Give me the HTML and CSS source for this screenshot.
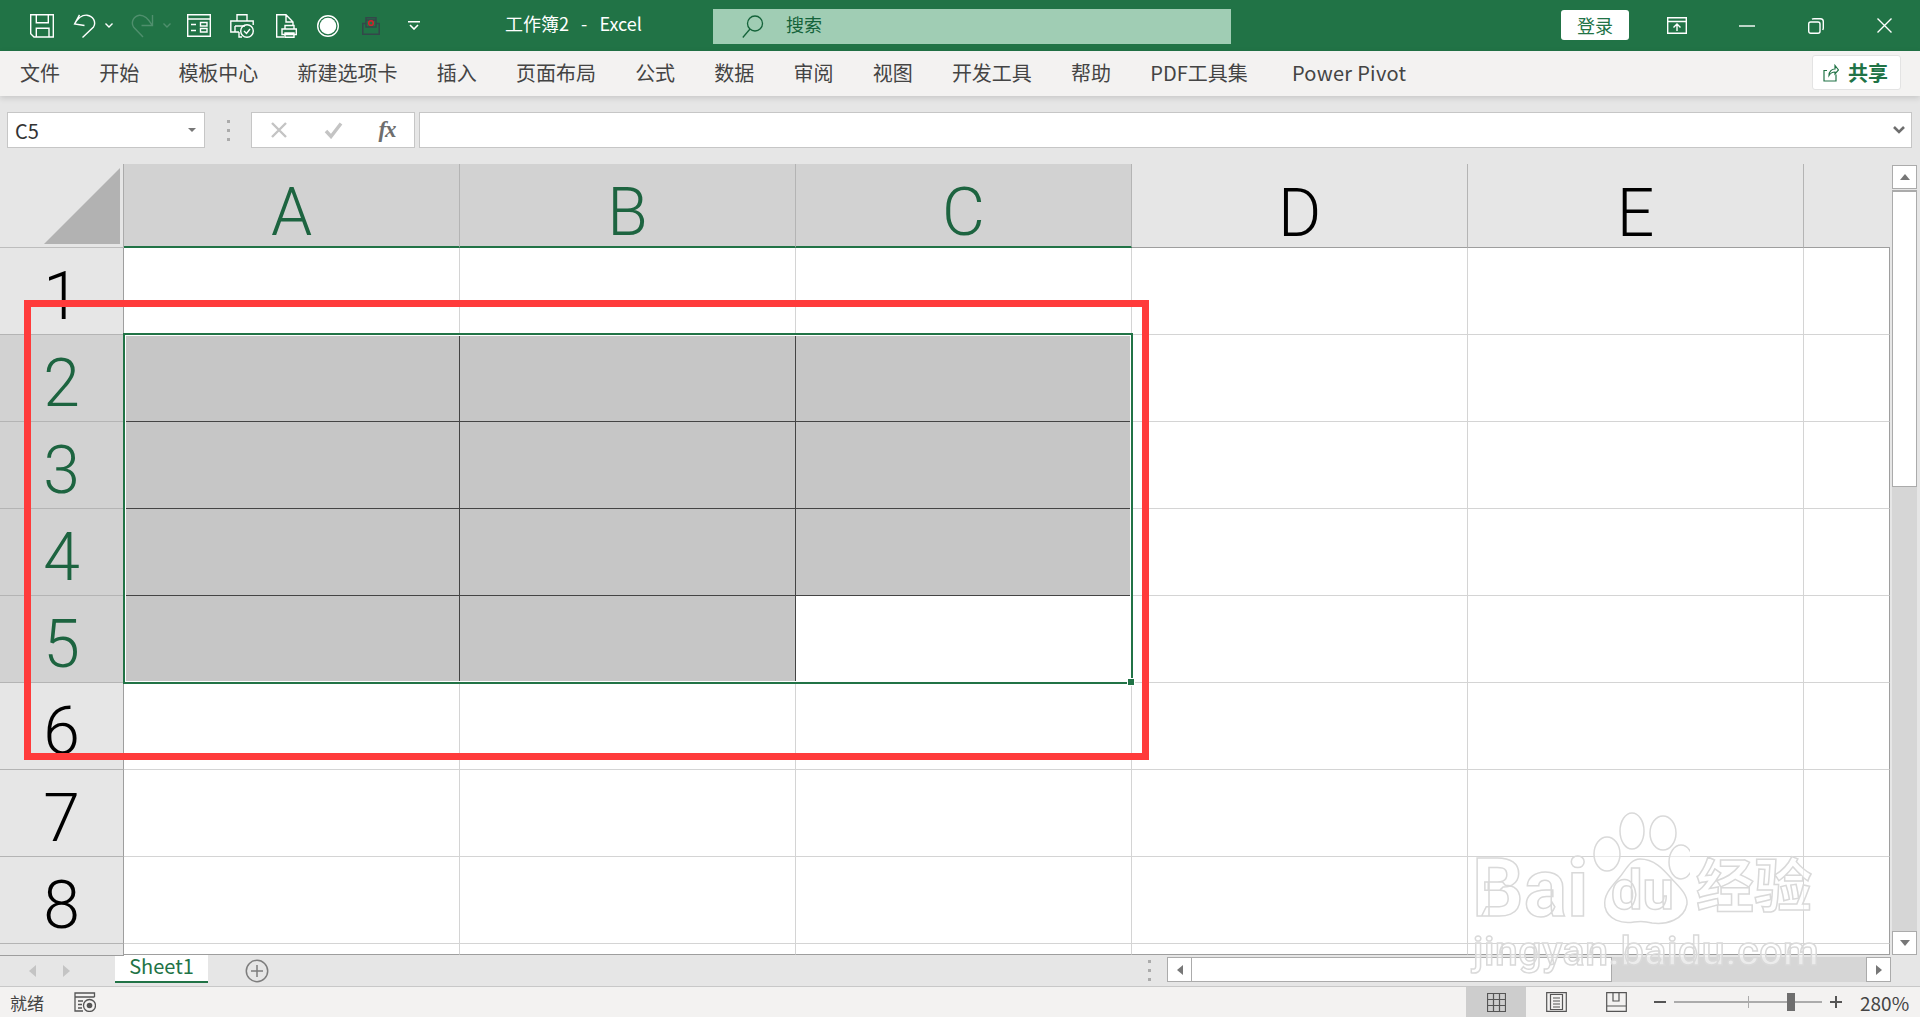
FILE: index.html
```html
<!DOCTYPE html>
<html lang="zh-CN">
<head>
<meta charset="utf-8">
<title>工作簿2 - Excel</title>
<link rel="stylesheet" href="styles.css">
</head>
<body>
<div class="app">
  <header class="titlebar">
    <svg class="ic q-save" width="24" height="24" viewBox="0 0 24 24"><path d="M.7.7H23.3V23H4L.7 19.7ZM6.3.7V8.8H18.3V.7M6.3 23V14.2H19V23"/></svg>
    <svg class="ic q-undo" width="23" height="24" viewBox="0 0 23 24"><path d="M6.5.8 1.6 10 11.5 11.5M1.6 10C5 4 9 .8 14 1.2 20 1.8 23.5 8 20.5 13L9.5 23.5"/></svg>
    <svg class="ic q-caret" width="8" height="5" viewBox="0 0 8 5"><path d="M.5.5 4 4 7.5.5"/></svg>
    <svg class="ic dim q-redo" width="23" height="24" viewBox="0 0 23 24"><path d="M21.5 1V11.5H10.500M21 11C17 4 13 1 8.500 1.200 3 1.800-.5 8 2.500 13L12 23"/></svg>
    <svg class="ic dim q-caret" width="8" height="5" viewBox="0 0 8 5"><path d="M.5.5 4 4 7.5.5"/></svg>
    <svg class="ic q-form" width="24" height="23" viewBox="0 0 24 23"><path d="M.7.7H23.300V22.300H.7ZM.7 5H23.300M4 10.500H9M4 16.500H9M13.500 8.500H20V12H13.500ZM13.500 14.500H20V18H13.500Z"/></svg>
    <svg class="ic q-pcheck" width="24" height="24" viewBox="0 0 24 24"><path d="M7 7V.8H17V7M9 18H.8V7H23.200V11M5 12V18M5 12H15M9 18V23H12"/><circle cx="17" cy="17" r="6.300"/><path d="M14 17 16.500 19.500 20 15"/></svg>
    <svg class="ic q-pdoc" width="21" height="24" viewBox="0 0 21 24"><path d="M8 23H.7V.7H10L17 8V11M10 .7V8H17M9 15V11.500H18V15M6 15H20.300V20.500H6ZM9 19H18V23.300H9Z"/></svg>
    <svg class="ic q-dot" width="22" height="22" viewBox="0 0 22 22"><circle cx="11" cy="11" r="10.300"/><circle class="fill" cx="11" cy="11" r="8.300"/></svg>
    <svg class="q-red" width="18" height="18" viewBox="0 0 18 18"><path class="red-body" d="M4 6V.8H14V6M4 3H14M.8 6.500H4V10H14V6.500H17.200V17.200H.8Z"/><circle class="red-dot" cx="9" cy="6" r="2.300"/></svg>
    <svg class="ic q-more" width="12" height="9" viewBox="0 0 12 9"><path d="M0 .8H12M2 4 6 8 10 4"/></svg>
    <div class="doc-title">工作簿2&nbsp;&nbsp;&nbsp;-&nbsp;&nbsp;&nbsp;Excel</div>
    <div class="search">
      <svg class="search-ic" width="22" height="23" viewBox="0 0 22 23"><circle cx="13" cy="8.500" r="7.500"/><path d="M8 14 .8 22.500"/></svg>
      <span>搜索</span>
    </div>
    <button class="login">登录</button>
    <svg class="ic w-ribbon" width="20" height="17" viewBox="0 0 20 17"><path d="M.7.7H19.300V16.300H.7ZM.7 4.500H19.300M6.500 10.500 10 7 13.500 10.500M10 7V14"/></svg>
    <svg class="ic w-min" width="16" height="2" viewBox="0 0 16 2"><path d="M0 1H16"/></svg>
    <svg class="ic w-max" width="16" height="16" viewBox="0 0 16 16"><rect x=".7" y="4" width="11.300" height="11.300" rx="2"/><path d="M4 1.200C4.500.9 5 .7 6 .7H12.500Q15.300.7 15.300 3.500V10C15.300 11 15 11.500 14.700 12"/></svg>
    <svg class="ic w-close" width="15" height="15" viewBox="0 0 15 15"><path d="M.5.5 14.500 14.500M14.500.5.5 14.500"/></svg>
  </header>

  <nav class="ribbon">
    <a>文件</a><a>开始</a><a>模板中心</a><a>新建选项卡</a><a>插入</a><a>页面布局</a><a>公式</a><a>数据</a><a>审阅</a><a>视图</a><a>开发工具</a><a>帮助</a><a>PDF工具集</a><a class="pp">Power Pivot</a>
    <button class="share">
      <svg width="16" height="18" viewBox="0 0 16 18"><path d="M13 10.500V17H1V6.500H4M6 11.500C6 7 9 5 12 5V1.500L15.500 6 12 10V8C9.500 8 7.500 9 6 11.500Z"/></svg>
      共享
    </button>
  </nav>

  <section class="fbar">
    <div class="namebox"><span>C5</span><i class="tri"></i></div>
    <div class="vdots"><i></i><i></i><i></i></div>
    <div class="fxbox">
      <span class="fxbtn"><svg width="16" height="16" viewBox="0 0 16 16"><path class="x" d="M1 1 15 15M15 1 1 15"/></svg></span>
      <span class="fxbtn"><svg width="19" height="17" viewBox="0 0 19 17"><path class="v" d="M2 9 7 14.500 17 1.500"/></svg></span>
      <span class="fxbtn fx">fx</span>
    </div>
    <div class="finput"><svg width="12" height="8" viewBox="0 0 12 8"><path d="M1 1 6 6 11 1"/></svg></div>
  </section>

  <main class="sheet-wrap">
    <div class="sheet">
      <div class="corner"><svg width="76" height="76" viewBox="0 0 76 76"><path d="M76 0V76H0Z"/></svg></div>
      <div class="ch sel">A</div><div class="ch sel">B</div><div class="ch sel">C</div><div class="ch">D</div><div class="ch">E</div><div class="ch end"></div>

      <div class="rh">1</div><div class="c"></div><div class="c"></div><div class="c"></div><div class="c"></div><div class="c"></div><div class="c end"></div>
      <div class="rh sel">2</div><div class="c on"></div><div class="c on"></div><div class="c on"></div><div class="c"></div><div class="c"></div><div class="c end"></div>
      <div class="rh sel">3</div><div class="c on"></div><div class="c on"></div><div class="c on"></div><div class="c"></div><div class="c"></div><div class="c end"></div>
      <div class="rh sel">4</div><div class="c on"></div><div class="c on"></div><div class="c on"></div><div class="c"></div><div class="c"></div><div class="c end"></div>
      <div class="rh sel">5</div><div class="c on"></div><div class="c on"></div><div class="c"></div><div class="c"></div><div class="c"></div><div class="c end"></div>
      <div class="rh">6</div><div class="c"></div><div class="c"></div><div class="c"></div><div class="c"></div><div class="c"></div><div class="c end"></div>
      <div class="rh">7</div><div class="c"></div><div class="c"></div><div class="c"></div><div class="c"></div><div class="c"></div><div class="c end"></div>
      <div class="rh">8</div><div class="c"></div><div class="c"></div><div class="c"></div><div class="c"></div><div class="c"></div><div class="c end"></div>
      <div class="rh last"></div><div class="c last"></div><div class="c last"></div><div class="c last"></div><div class="c last"></div><div class="c last"></div><div class="c end last"></div>

      <div class="selection"><i class="handle"></i></div>
    </div>
    <aside class="vscroll">
      <div class="sbtn"><i class="arrow up"></i></div>
      <div class="vthumb"></div>
      <div class="vtrack"></div>
      <div class="sbtn"><i class="arrow down"></i></div>
    </aside>
  </main>

  <section class="tabbar">
    <div class="tabnav"><i class="arrow left faint"></i><i class="arrow right faint"></i></div>
    <div class="sheettab">Sheet1</div>
    <svg class="addsheet" width="24" height="24" viewBox="0 0 24 24"><circle cx="12" cy="12" r="10.700"/><path d="M12 6V18M6 12H18"/></svg>
    <div class="vdots hs"><i></i><i></i><i></i></div>
    <div class="hscroll">
      <div class="hbtn"><i class="arrow left"></i></div>
      <div class="hthumb"></div>
      <div class="htrack"></div>
      <div class="hbtn end"><i class="arrow right"></i></div>
    </div>
  </section>

  <footer class="status">
    <span class="ready">就绪</span>
    <svg class="macro" width="22" height="20" viewBox="0 0 22 20"><path d="M20.500 5V1H1V19H9M1 5H20.500M4 9H9M4 12.500H8M4 16H8"/><circle cx="15.500" cy="13.500" r="6"/><circle class="fill" cx="15.500" cy="13.500" r="2.800"/></svg>
    <div class="views">
      <span class="view active"><svg width="19" height="19" viewBox="0 0 19 19"><path d="M.5.5H18.500V18.500H.5ZM6.500.5V18.500M12.500.5V18.500M.5 6.500H18.500M.5 12.500H18.500"/></svg></span>
      <span class="view"><svg width="21" height="20" viewBox="0 0 21 20"><path d="M.7.7H20.300V19.300H.7ZM4.500 2.500H16.500V17.500H4.500ZM7 6H14M7 9H14M7 12H14M7 15H14"/></svg></span>
      <span class="view"><svg width="21" height="20" viewBox="0 0 21 20"><path d="M.7.7H20.300V19.300H.7ZM.7 14H20.300M7 .7V9H13V.7"/></svg></span>
    </div>
    <div class="zoombar">
      <i class="zm"></i>
      <div class="slider"><i class="tick"></i><i class="knob"></i></div>
      <i class="zp"></i>
    </div>
    <span class="pct">280%</span>
  </footer>
</div>

<div class="redframe"></div>

<div class="watermark">
  <span class="wm bai">Bai</span>
  <svg class="paw" width="100" height="115" viewBox="0 0 100 115"><ellipse cx="17" cy="42" rx="13" ry="17"/><ellipse cx="42" cy="19" rx="12" ry="18"/><ellipse cx="73" cy="21" rx="13" ry="17"/><ellipse cx="91" cy="50" rx="12" ry="17"/><path d="M50 47C40 47 36 58 29 66 20 76 13 84 15 95 18 108 32 112 44 110 50 109 55 109 62 111 76 113 94 108 97 92 98 82 88 74 81 66 73 57 64 47 50 47Z"/></svg>
  <span class="wm du">du</span>
  <span class="wm jy">经验</span>
  <span class="wm url">jingyan.baidu.com</span>
</div>
</body>
</html>
```

FILE: styles.css
```css
* { box-sizing: border-box; }
html, body { margin: 0; padding: 0; }
body {
  position: relative;
  width: 1920px;
  height: 1017px;
  overflow: hidden;
  font-family: "Noto Sans CJK SC", "Noto Sans", sans-serif;
  background: #e6e6e6;
}
.app { display: flex; flex-direction: column; height: 1017px; }

/* title bar */
.titlebar {
  display: flex;
  align-items: center;
  flex: 0 0 51px;
  padding-left: 30px;
  background: #217346;
  color: #fff;
}
.ic { flex: none; fill: none; stroke: #fff; stroke-width: 1.4; }
.ic.dim { stroke: #4f8f6d; }
.ic .fill { fill: #fff; stroke: none; }
.q-undo { margin-left: 19px; }
.q-caret { margin-left: 9px; }
.q-redo { margin-left: 18px; }
.q-form { margin-left: 16px; }
.q-pcheck { margin-left: 19px; }
.q-pdoc { margin-left: 22px; }
.q-dot { margin-left: 20px; }
.q-red { flex: none; margin-left: 23px; fill: none; }
.red-body { stroke: #34474a; stroke-width: 1.5; }
.red-dot { stroke: #d3202c; stroke-width: 1.6; }
.q-more { margin-left: 28px; stroke-width: 1.6; }
.doc-title {
  flex: 0 0 208px;
  margin-left: 85px;
  font-size: 18px;
  white-space: nowrap;
  transform: translateY(-3px);
}
.search {
  display: flex;
  align-items: center;
  flex: 0 0 518px;
  height: 35px;
  margin-top: 1px;
  padding-left: 29px;
  background: #a0cdb4;
  color: #14633a;
  font-size: 18px;
}
.search-ic { fill: none; stroke: #14633a; stroke-width: 1.3; }
.search span { margin-left: 22px; transform: translateY(-2px); }
.login {
  width: 68px;
  height: 30px;
  margin: 0 0 1px 330px;
  padding: 0;
  border: 0;
  border-radius: 3px;
  background: #fff;
  color: #217346;
  font: 18px "Noto Sans CJK SC", sans-serif;
}
.w-ribbon { margin-left: 38px; }
.w-min { margin-left: 52px; }
.w-max { margin-left: 53px; }
.w-close { margin-left: 53px; }

/* ribbon tabs */
.ribbon {
  position: relative;
  z-index: 2;
  display: flex;
  align-items: center;
  flex: 0 0 45px;
  gap: 39.2px;
  padding: 0 0 2px 20px;
  background: #f3f2f1;
  color: #444;
  font-size: 20px;
  box-shadow: 0 2px 6px rgba(0, 0, 0, .14);
}
.ribbon a { white-space: nowrap; }
.ribbon .pp { margin-left: 5px; letter-spacing: .3px; }
.share {
  display: flex;
  align-items: center;
  gap: 9px;
  width: 89px;
  height: 35px;
  margin-left: auto;
  margin-right: 19px;
  padding: 0 0 0 10px;
  border: 1px solid #e3e3e3;
  border-radius: 3px;
  background: #fff;
  color: #217346;
  font: 700 20px "Noto Sans CJK SC", sans-serif;
}
.share svg { fill: none; stroke: #217346; stroke-width: 1.2; }

/* formula bar */
.fbar {
  display: flex;
  flex: 0 0 68px;
  padding: 16px 8px 16px 7px;
  background: #e6e6e6;
}
.namebox {
  display: flex;
  align-items: center;
  justify-content: space-between;
  width: 198px;
  padding: 0 8px 0 7px;
  border: 1px solid #c6c6c6;
  background: #fff;
  color: #333;
  font-size: 20px;
}
.tri {
  width: 0;
  height: 0;
  border: 4px solid transparent;
  border-top: 4px solid #777;
  border-bottom: 0;
}
.vdots { display: flex; flex-direction: column; align-items: center; justify-content: center; gap: 6px; width: 46px; }
.vdots i { width: 3px; height: 3px; background: #ababab; }
.fxbox {
  display: flex;
  width: 164px;
  border: 1px solid #c6c6c6;
  background: #fff;
}
.fxbtn { display: flex; align-items: center; justify-content: center; width: 54px; }
.fxbtn .x { fill: none; stroke: #c4c4c4; stroke-width: 2.4; }
.fxbtn .v { fill: none; stroke: #c4c4c4; stroke-width: 3.4; }
.fx { color: #6e6e6e; font: italic 700 23px "Liberation Serif", serif; letter-spacing: -1px; }
.finput {
  display: flex;
  align-items: center;
  justify-content: flex-end;
  width: 1493px;
  margin-left: 4px;
  padding-right: 6px;
  border: 1px solid #c6c6c6;
  background: #fff;
}
.finput svg { fill: none; stroke: #6e6e6e; stroke-width: 2.6; }

/* sheet */
.sheet-wrap { display: flex; flex: 0 0 791px; }
.sheet {
  position: relative;
  display: grid;
  flex: 0 0 1890px;
  grid-template-columns: 124px repeat(5, 336px) 86px;
  grid-template-rows: 84px repeat(8, 87px) 11px;
  background: #fff;
}
.corner {
  display: flex;
  justify-content: flex-end;
  padding: 4px 3px 0 0;
  background: #e6e6e6;
  border-right: 1px solid #ababab;
  border-bottom: 1px solid #bdbdbd;
}
.corner svg { fill: #b2b2b2; }
.ch {
  display: flex;
  align-items: center;
  justify-content: center;
  padding-top: 16px;
  border-right: 1px solid #b4b4b4;
  border-bottom: 1px solid #9e9e9e;
  background: #e6e6e6;
  color: #000;
  font: 300 66px/1 "Roboto", sans-serif;
}
.ch.sel { border-bottom: 2px solid #217346; background: #d2d2d2; color: #1d6440; }
.ch.end { border-right: 0; }
.rh {
  display: flex;
  align-items: center;
  justify-content: center;
  padding-top: 11px;
  border-right: 1px solid #9e9e9e;
  border-bottom: 1px solid #b4b4b4;
  background: #e6e6e6;
  color: #000;
  font: 300 66px/1 "Roboto", sans-serif;
}
.rh.sel { background: #d2d2d2; color: #1d6440; }
.rh.last { border-bottom: 1px solid #9e9e9e; }
.c { border-right: 1px solid #d4d4d4; border-bottom: 1px solid #d4d4d4; background: #fff; }
.c.on { border-color: #444; background: #c6c6c6; }
.c.end { border-right: 1px solid #9e9e9e; }
.c.last { border-bottom: 1px solid #9e9e9e; }
.selection {
  position: absolute;
  left: 123px;
  top: 169px;
  width: 1010px;
  height: 351px;
  border: 2px solid #217346;
  box-shadow: inset 0 0 0 1px #fff;
}
.handle {
  position: absolute;
  right: -4px;
  bottom: -4px;
  width: 8px;
  height: 8px;
  border: 1px solid #fff;
  background: #217346;
}

/* scrollbars */
.vscroll {
  display: flex;
  flex: 0 0 30px;
  flex-direction: column;
  padding: 1px 3px 0 2px;
  background: #e6e6e6;
}
.sbtn {
  display: flex;
  align-items: center;
  justify-content: center;
  flex: 0 0 24px;
  border: 1px solid #ababab;
  background: #fff;
}
.vthumb { flex: 0 0 297px; margin-top: 1px; border: 1px solid #ababab; border-top-width: 2px; background: #fff; }
.vtrack { flex: 1; background: #d6d6d6; }
.arrow { display: block; width: 0; height: 0; border: 0 solid transparent; }
.arrow.up { border-width: 0 5px 6px; border-bottom-color: #777; }
.arrow.down { border-width: 6px 5px 0; border-top-color: #777; }
.arrow.left { border-width: 5px 6px 5px 0; border-right-color: #777; }
.arrow.right { border-width: 5px 0 5px 6px; border-left-color: #777; }
.arrow.faint.left { border-width: 6px 7px 6px 0; border-color: transparent #c4c4c4 transparent transparent; }
.arrow.faint.right { border-width: 6px 0 6px 7px; border-color: transparent transparent transparent #c4c4c4; }

/* sheet tabs */
.tabbar {
  display: flex;
  align-items: center;
  flex: 0 0 32px;
  border-bottom: 1px solid #c8c8c8;
  background: #e6e6e6;
}
.tabnav { display: flex; justify-content: center; align-items: center; gap: 27px; flex: 0 0 115px; padding-right: 16px; }
.sheettab {
  flex: 0 0 93px;
  align-self: flex-start;
  height: 29px;
  margin-top: -1px;
  border-bottom: 2px solid #217346;
  background: #fff;
  color: #217346;
  font-size: 20px;
  line-height: 23px;
  text-align: center;
}
.addsheet { flex: none; margin-left: 37px; fill: none; stroke: #7d7d7d; stroke-width: 1.5; }
.vdots.hs { width: 18px; margin-left: 871px; gap: 6px; }
.hscroll { display: flex; flex: 0 0 724px; height: 25px; margin: -2px 0 0 9px; }
.hbtn {
  display: flex;
  align-items: center;
  justify-content: center;
  flex: 0 0 25px;
  border: 1px solid #ababab;
  background: #fff;
}
.hthumb { flex: 0 0 421px; margin-left: -1px; border: 1px solid #ababab; background: #fff; }
.htrack { flex: 1; background: #d6d6d6; }

/* status bar */
.status {
  display: flex;
  align-items: center;
  flex: 0 0 30px;
  background: #f3f2f1;
  color: #444;
}
.ready { flex: 0 0 35px; margin-left: 10px; font-size: 17px; line-height: 1; }
.macro { flex: none; margin-left: 29px; fill: none; stroke: #555; stroke-width: 1.3; }
.macro .fill { fill: #555; stroke: none; }
.views { display: flex; align-self: stretch; margin-left: 1370px; }
.view { display: flex; align-items: center; justify-content: center; width: 60px; }
.view.active { background: #cdcdcd; }
.view svg { fill: none; stroke: #555; stroke-width: 1.2; }
.zoombar { display: flex; align-items: center; margin-left: 8px; }
.zm, .zp { position: relative; display: block; width: 12px; height: 12px; }
.zm::before, .zp::before { content: ""; position: absolute; left: 0; right: 0; top: 5px; height: 1.500px; background: #555; }
.zp::after { content: ""; position: absolute; top: 0; bottom: 0; left: 5px; width: 1.500px; background: #555; }
.slider { position: relative; width: 148px; height: 2px; margin: 0 8px; background: #ababab; }
.tick { position: absolute; left: 74px; top: -5px; width: 1px; height: 12px; background: #ababab; }
.knob { position: absolute; left: 113px; top: -8px; width: 8px; height: 18px; background: #6e6e6e; }
.pct { margin-left: 18px; font-size: 19px; line-height: 1; }

/* annotation laid over the screenshot */
.redframe {
  position: absolute;
  left: 24px;
  top: 300px;
  width: 1125px;
  height: 460px;
  border: 7px solid #ff3b3b;
}

/* watermark */
.watermark { position: absolute; left: 0; top: 0; width: 1920px; height: 1017px; pointer-events: none; filter: blur(.5px); }
.wm {
  position: absolute;
  color: rgba(255, 255, 255, .55);
  -webkit-text-stroke: 1.500px #d9d9d9;
  white-space: nowrap;
  line-height: 1;
}
.bai { left: 1472px; top: 848px; font: 700 81px/1 "Roboto", sans-serif; }
.du { left: 1611px; top: 862px; font: 700 56px/1 "Roboto", sans-serif; }
.jy { left: 1696px; top: 853px; font: 700 58px/1 "Noto Sans CJK SC", sans-serif; }
.url { left: 1473px; top: 931px; font: 500 41px/1 "Roboto", sans-serif; letter-spacing: .6px; }
.paw { position: absolute; left: 1590px; top: 812px; fill: rgba(255, 255, 255, .5); stroke: #d9d9d9; stroke-width: 1.500; }
```
